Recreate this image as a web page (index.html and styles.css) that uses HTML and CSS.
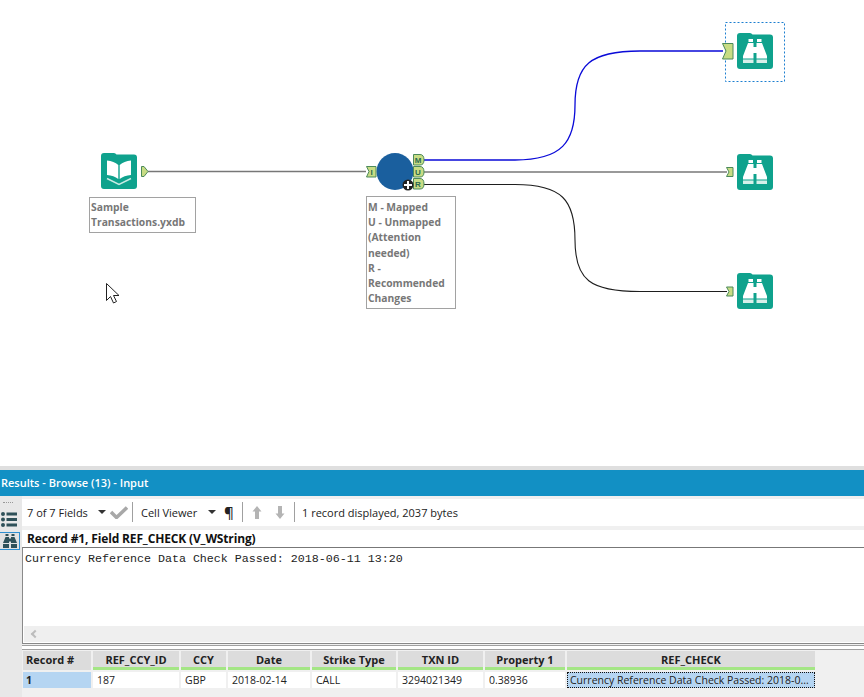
FILE: index.html
```html
<!DOCTYPE html>
<html lang="en">
<head>
<meta charset="utf-8">
<title>Results - Browse</title>
<link rel="stylesheet" href="styles.css">
</head>
<body>
<svg class="defs" width="0" height="0" aria-hidden="true">
  <defs>
    <g id="binoculars">
      <path class="tile" d="M3 0H13Q14.500 0 15.500 1.500H33Q36 1.500 36 4.500V33Q36 36 33 36H3Q0 36 0 33V3Q0 0 3 0Z"/>
      <path class="white" d="M11.500 6H16V9H11.500ZM20 6H24.500V9H20ZM11 10H16.500V14H19.500V10H25L30 23V25.500H19.500V20H16.500V25.500H6V23Z"/>
      <path class="pale" d="M6 26.500H16.500V30H6ZM19.500 26.500H30V30H19.500Z"/>
    </g>
    <g id="book">
      <path class="tile" d="M3 0H13Q14.500 0 15.500 1.500H33Q36 1.500 36 4.500V33Q36 36 33 36H3Q0 36 0 33V3Q0 0 3 0Z"/>
      <path class="white" d="M6 7.500Q13 8 17.300 12V26Q13 22.500 6 22ZM30 7.500Q23 8 18.700 12V26Q23 22.500 30 22Z"/>
      <path class="chev" d="M6 25.500L18 31.500L30 25.500"/>
    </g>
  </defs>
</svg>

<main class="app">
  <section class="canvas">
    <svg class="wires" width="864" height="466" viewBox="0 0 864 466">
      <path class="wire-grey" d="M148 171.500H366"/>
      <path class="wire-grey" d="M424 172H727"/>
      <path class="wire-dark" d="M424 184.500H515C562 184.500 575 200 575 240C575 280 590 291.500 640 291.500H727"/>
      <path class="wire-blue" d="M424 160H515C562 160 575 142 575 105C575 65 590 51 640 51H723"/>

      <rect class="selection" x="725.500" y="22.500" width="59" height="59"/>

      <use href="#book" x="101" y="153"/>
      <use href="#binoculars" x="737" y="33"/>
      <use href="#binoculars" x="737" y="154"/>
      <use href="#binoculars" x="737" y="273"/>

      <path class="anchor" d="M141.500 166.500H144L148 171.500L144 176.500H141.500Z"/>
      <path class="anchor" d="M722.500 43.500H733V59H722.500L726 51Z"/>
      <path class="anchor" d="M726.500 167.500H733V176.500H726.500L729 172Z"/>
      <path class="anchor" d="M726.500 287H733V296H726.500L729 291.500Z"/>

      <circle class="macro" cx="395" cy="171.500" r="18.500"/>
      <path class="anchor" d="M366.500 166.500H376V177H366.500L369 171.500Z"/>
      <path class="anchor" d="M413.500 154.500H420Q424 154.500 424 160Q424 165 420 165H413.500Z"/>
      <path class="anchor" d="M413.500 166.500H420Q424 166.500 424 172Q424 177 420 177H413.500Z"/>
      <path class="anchor" d="M413.500 178.500H420Q424 178.500 424 184Q424 189 420 189H413.500Z"/>
      <text class="anchor-text" x="371.500" y="174.500">I</text>
      <text class="anchor-text" x="418" y="163">M</text>
      <text class="anchor-text" x="418" y="175">U</text>
      <text class="anchor-text" x="418" y="187">R</text>

      <circle class="plus-bg" cx="408" cy="185" r="5.500"/>
      <path class="plus" d="M408 181V189M404 185H412"/>

      <path class="cursor" d="M106.500 283.500V300.500L110.500 296.500L113.500 303L116.500 301.500L113.500 295.500H119Z"/>
    </svg>
    <div class="note note-input">Sample Transactions.yxdb</div>
    <div class="note note-macro">M - Mapped<br>U - Unmapped (Attention needed)<br>R - Recommended Changes</div>
  </section>

  <div class="splitter"></div>
  <header class="results-title">Results - Browse (13) - Input</header>

  <div class="results-body">
    <aside class="rail">
      <div class="grip"></div>
      <svg class="rail-icon" width="18" height="17" viewBox="0 0 18 17">
        <path class="rail-fill" d="M1 3a2 2 0 1 0 4 0a2 2 0 1 0-4 0ZM1 8.500a2 2 0 1 0 4 0a2 2 0 1 0-4 0ZM1 14a2 2 0 1 0 4 0a2 2 0 1 0-4 0ZM6.500 1.500H17V4.500H6.500ZM6.500 7H17V10H6.500ZM6.500 12.500H17V15.500H6.500Z"/>
      </svg>
      <div class="rail-active">
        <svg width="16" height="16" viewBox="0 0 16 16">
          <path class="rail-fill" d="M3.500 1H6.500V3H3.500ZM9.500 1H12.500V3H9.500ZM3.500 4H7V10H1ZM9 4H12.500L15 10H9ZM7 5.500H9V8.500H7ZM1 11H7V15H1ZM9 11H15V15H9Z"/>
        </svg>
      </div>
    </aside>

    <div class="results-main">
      <div class="toolbar">
        <span class="tb-label tb-fields">7 of 7 Fields</span>
        <span class="caret"></span>
        <svg class="tb-check" width="18" height="14" viewBox="0 0 18 14"><path d="M1 7L6.500 12.500L17 2.500" /></svg>
        <span class="tb-sep"></span>
        <span class="tb-label tb-viewer">Cell Viewer</span>
        <span class="caret"></span>
        <span class="pilcrow">¶</span>
        <span class="tb-sep"></span>
        <svg class="tb-arrow" width="12" height="15" viewBox="0 0 12 15"><path d="M6 1L10.500 6.500H8V14H4V6.500H1.500Z"/></svg>
        <svg class="tb-arrow tb-arrow-down" width="12" height="15" viewBox="0 0 12 15"><path d="M4 1H8V8.500H10.500L6 14L1.500 8.500H4Z"/></svg>
        <span class="tb-sep"></span>
        <span class="tb-label tb-status">1 record displayed, 2037 bytes</span>
      </div>

      <div class="record-title">Record #1, Field REF_CHECK (V_WString)</div>

      <div class="cell-viewer">
        <pre class="cell-text">Currency Reference Data Check Passed: 2018-06-11 13:20</pre>
        <div class="scrollbar"><span class="scroll-left"></span></div>
      </div>

      <div class="grid-split"></div>

      <div class="grid">
        <div class="head head-first">Record #</div>
        <div class="head">REF_CCY_ID</div>
        <div class="head">CCY</div>
        <div class="head">Date</div>
        <div class="head">Strike Type</div>
        <div class="head">TXN ID</div>
        <div class="head">Property 1</div>
        <div class="head">REF_CHECK</div>
        <div class="cell cell-row">1</div>
        <div class="cell">187</div>
        <div class="cell">GBP</div>
        <div class="cell">2018-02-14</div>
        <div class="cell">CALL</div>
        <div class="cell">3294021349</div>
        <div class="cell">0.38936</div>
        <div class="cell cell-focus">Currency Reference Data Check Passed: 2018-0...</div>
      </div>
    </div>
  </div>
</main>
</body>
</html>
```

FILE: styles.css
```css
* { box-sizing: border-box; }
html, body { margin: 0; padding: 0; }
body {
  width: 864px;
  height: 697px;
  overflow: hidden;
  background: #fff;
  font-family: "Open Sans", "Liberation Sans", sans-serif;
  font-size: 11px;
  color: #1c1c1c;
}
.defs { position: absolute; }
.app { display: flex; flex-direction: column; height: 697px; }

/* canvas */
.canvas { position: relative; height: 466px; flex: none; background: #fff; }
.wires { position: absolute; left: 0; top: 0; display: block; }
.wire-grey { fill: none; stroke: #777; stroke-width: 1.600; }
.wire-dark { fill: none; stroke: #1e1e1e; stroke-width: 1.100; }
.wire-blue { fill: none; stroke: #0a0ad8; stroke-width: 1.300; }
.selection { fill: none; stroke: #1c7fd0; stroke-width: 1; stroke-dasharray: 2 2; }
.tile { fill: #0fa28d; }
.white { fill: #fff; }
.pale { fill: #d5f0ea; }
.chev { fill: none; stroke: #c9ebe4; stroke-width: 1.500; }
.anchor { fill: #c8dc84; stroke: #4c8a5a; stroke-width: 1; }
.anchor-text { font-family: "Liberation Sans", sans-serif; font-size: 8px; font-weight: 700; fill: #2b6a50; text-anchor: middle; }
.macro { fill: #1a5f9e; }
.plus-bg { fill: #222; }
.plus { fill: none; stroke: #fff; stroke-width: 2; }
.cursor { fill: #fff; stroke: #222; stroke-width: 1; }

.note {
  position: absolute;
  border: 1px solid #a2a2a2;
  background: #fff;
  color: #777;
  font-size: 10.300px;
  font-weight: 700;
  line-height: 15.200px;
  padding: 2px 1px 0;
}
.note-input { left: 89px; top: 197px; width: 107px; height: 36px; }
.note-macro { left: 366px; top: 196px; width: 90px; height: 113px; padding-top: 3px; }

.splitter { height: 4px; flex: none; background: #dfdfdf; }
.results-title {
  height: 26px;
  flex: none;
  background: #1290c4;
  color: #fff;
  font-size: 11px;
  font-weight: 600;
  line-height: 26px;
  padding-left: 1px;
}

.results-body { flex: 1; display: flex; min-height: 0; }
.rail {
  width: 22px;
  flex: none;
  background: #e8e8e8;
  display: flex;
  flex-direction: column;
  align-items: flex-start;
  padding-top: 6px;
}
.grip { width: 10px; height: 2px; margin-left: 3px; border-top: 1px dotted #999; }
.rail-icon { display: block; margin-top: 7px; }
.rail-active {
  width: 20px;
  height: 18px;
  margin-top: 4px;
  background: #e2e2e2;
  border: 1px solid #2f8fd0;
  border-left: none;
  display: flex;
  align-items: center;
  justify-content: center;
}
.rail-fill { fill: #2f5159; }

.results-main { flex: 1; min-width: 0; display: flex; flex-direction: column; background: #f0f0f0; }

.toolbar {
  height: 27px;
  margin-top: 3px;
  padding-bottom: 1px;
  flex: none;
  background: #fff;
  display: flex;
  align-items: center;
  color: #222;
}
.tb-label { white-space: nowrap; }
.tb-fields { margin-left: 5px; width: 66px; }
.caret {
  width: 0; height: 0;
  margin-left: 5px;
  border-left: 4px solid transparent;
  border-right: 4px solid transparent;
  border-top: 4px solid #333;
  flex: none;
}
.tb-check { margin-left: 4px; flex: none; }
.tb-check path { fill: none; stroke: #a8a8a8; stroke-width: 3.500; }
.tb-sep { width: 1px; height: 20px; background: #a0a0a0; margin-left: 8px; flex: none; }
.tb-check + .tb-sep { margin-left: 4px; }
.tb-viewer { margin-left: 8px; width: 62px; }
.pilcrow { margin-left: 8px; width: 10px; font-size: 15px; font-weight: 600; color: #222; }
.tb-arrow { margin-left: 8px; flex: none; }
.tb-arrow path { fill: #b4b4b4; }
.tb-arrow-down { margin-left: 11px; }
.tb-status { margin-left: 7px; }

.record-title {
  margin-top: 4px;
  height: 17px;
  flex: none;
  background: #fff;
  font-weight: 700;
  font-size: 12px;
  letter-spacing: -0.150px;
  line-height: 17px;
  padding-left: 5px;
  color: #111;
  white-space: nowrap;
}

.cell-viewer {
  height: 97px;
  flex: none;
  display: flex;
  flex-direction: column;
  background: #fff;
  border-top: 1px solid #777;
  border-left: 1px solid #8a8a8a;
  border-bottom: 1px solid #888;
}
.cell-text {
  flex: 1;
  margin: 0;
  padding: 5px 0 0 2px;
  font-family: "Liberation Mono", monospace;
  font-size: 11.670px;
  line-height: 13px;
  color: #222;
}
.scrollbar {
  height: 16px;
  flex: none;
  margin: 0 0 1px 1px;
  background: #efefef;
  display: flex;
  align-items: center;
  padding-left: 8px;
}
.scroll-left {
  width: 6px;
  height: 6px;
  border-left: 2px solid #bcbcbc;
  border-bottom: 2px solid #bcbcbc;
  transform: rotate(45deg);
}

.grid-split {
  height: 5px;
  flex: none;
  margin-top: 1px;
  border-top: 1px solid #a0a0a0;
  border-bottom: 1px solid #a0a0a0;
  background: #fff;
}

.grid {
  margin-top: 1px;
  margin-left: 1px;
  display: grid;
  grid-template-columns: 68px 86px 45px 82px 84px 85px 80px 248px;
  grid-template-rows: 19px 16px;
  column-gap: 2px;
  row-gap: 2px;
}
.head {
  background: #dcdcdc;
  border-bottom: 3px solid #a4e685;
  font-weight: 700;
  font-size: 11px;
  line-height: 17px;
  text-align: center;
  color: #222;
  white-space: nowrap;
}
.head-first { text-align: left; padding-left: 3px; border-bottom: none; line-height: 18px; }
.cell {
  background: #fff;
  font-size: 10.500px;
  line-height: 16px;
  padding-left: 4px;
  color: #222;
  white-space: nowrap;
}
.cell-row { background: #b5d5f2; font-weight: 700; padding-left: 3px; }
.cell-focus { background: #b5d5f2; outline: 1px dotted #111; outline-offset: -1px; padding-left: 3px; }
```
